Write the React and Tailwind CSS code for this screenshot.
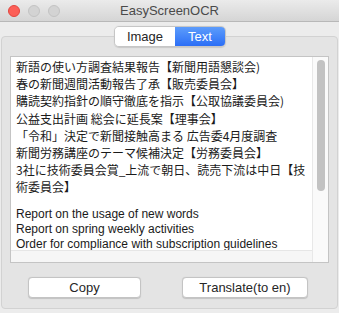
export default function App() {
  const jaLines = [
    "新語の使い方調査結果報告【新聞用語懇談会)",
    "春の新聞週間活動報告了承【販売委員会】",
    "購読契約指針の順守徹底を指示【公取協議委員会)",
    "公益支出計画 総会に延長案【理事会】",
    "「令和」決定で新聞接触高まる 広告委4月度調査",
    "新聞労務講座のテーマ候補決定【労務委員会】",
    "3社に技術委員会賞_上流で朝日、読売下流は中日【技",
    "術委員会】",
  ];
  const enLines = [
    "Report on the usage of new words",
    "Report on spring weekly activities",
    "Order for compliance with subscription guidelines",
  ];

  return (
    <div
      className="w-[339px] h-[313px] bg-[#ececec] flex flex-col overflow-hidden text-[#222]"
      style={{ fontFamily: '"Liberation Sans", Arial, sans-serif' }}
    >
      {/* title bar */}
      <div className="h-[22px] flex items-center relative bg-gradient-to-b from-[#ebebeb] to-[#d5d5d5] border-b border-[#b8b8b8]">
        <div className="flex items-center gap-[8px] pl-[8px]">
          <span className="w-[12px] h-[12px] rounded-full bg-[#fc5f57] border border-[#e2463f]" />
          <span className="w-[12px] h-[12px] rounded-full bg-[#d3d3d3] border border-[#c3c3c3]" />
          <span className="w-[12px] h-[12px] rounded-full bg-[#d3d3d3] border border-[#c3c3c3]" />
        </div>
        <div className="absolute inset-0 flex items-center justify-center text-[13px] text-[#4a4a4a]">
          EasyScreenOCR
        </div>
      </div>

      {/* segmented control */}
      <div className="flex justify-center pt-[4px] relative z-10 pl-[1px]">
        <div className="flex h-[21px] rounded-[5px] border border-[#c6c6c6] overflow-hidden shadow-[0_0.5px_1px_rgba(0,0,0,0.12)] text-[13px]">
          <div className="w-[60px] bg-white flex items-center justify-center text-[#262626]">Image</div>
          <div className="w-[50px] bg-gradient-to-b from-[#5d9cfb] to-[#2c6ef6] flex items-center justify-center text-white">
            Text
          </div>
        </div>
      </div>

      {/* tab box */}
      <div className="ml-[1px] w-[337px] -mt-[11px] h-[273px] bg-[#e4e4e4] border border-[#d2d2d2] rounded-[4px] flex flex-col px-[8px] pt-[19px]">
        <div className="w-[319px] h-[207px] bg-white border border-[#c4c4c4] flex">
          <div className="flex-1 flex flex-col min-w-0">
            <div className="flex-1 pl-[5px] pt-[1px] overflow-hidden">
              {jaLines.map((l, i) => (
                <div
                  key={i}
                  className="h-[17.2px] leading-[17.2px] text-[12px] whitespace-nowrap text-[#1a1a1a]"
                  style={{ fontFamily: '"Noto Sans CJK JP", "Liberation Sans", sans-serif' }}
                >
                  {l}
                </div>
              ))}
              <div className="h-[11px]" />
              {enLines.map((l, i) => (
                <div key={i} className="h-[15px] leading-[15px] text-[12px] whitespace-nowrap text-[#1a1a1a]">
                  {l}
                </div>
              ))}
            </div>
            <div className="h-[12px] bg-[#f6f6f6] border-t border-[#e6e6e6]" />
          </div>
          <div className="w-[16px] bg-[#fafafa] border-l border-[#e8e8e8] flex justify-center pt-[3px]">
            <div className="w-[8px] h-[131px] rounded-full bg-[#c2c2c2]" />
          </div>
        </div>

        <div className="flex mt-[14px] pl-[18px] gap-[41px] text-[13px] text-[#262626]">
          <button className="w-[113px] h-[21px] bg-white border border-[#c4c4c4] rounded-[4px] shadow-[0_0.5px_1px_rgba(0,0,0,0.15)] flex items-center justify-center">
            Copy
          </button>
          <button className="w-[126px] h-[21px] bg-white border border-[#c4c4c4] rounded-[4px] shadow-[0_0.5px_1px_rgba(0,0,0,0.15)] flex items-center justify-center">
            Translate(to en)
          </button>
        </div>
      </div>
    </div>
  );
}
